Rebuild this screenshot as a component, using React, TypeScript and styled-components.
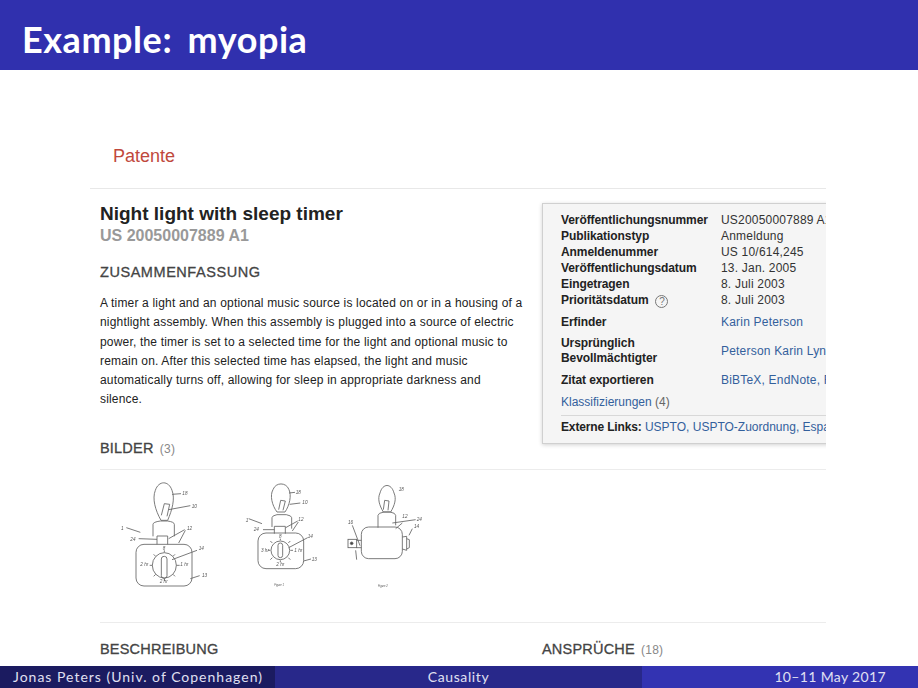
import React from "react";
import styled, { createGlobalStyle } from "styled-components";

const GlobalStyle = createGlobalStyle`
  html, body {
    margin: 0;
    padding: 0;
    background: #fff;
  }
`;

interface MetaRow {
  label: string;
  value: string;
}

const idRows: MetaRow[] = [
  { label: "Veröffentlichungsnummer", value: "US20050007889 A1" },
  { label: "Publikationstyp", value: "Anmeldung" },
  { label: "Anmeldenummer", value: "US 10/614,245" },
  { label: "Veröffentlichungsdatum", value: "13. Jan. 2005" },
  { label: "Eingetragen", value: "8. Juli 2003" },
];

// the three patent drawings use the same coordinates as a 3x crop of the page
function DrawingOne() {
  return (
    <Sketch width="100" height="117" viewBox="80 20 300 351">
      <path d="M212 150 C195 120 185 85 195 60 C205 30 235 30 245 60 C255 85 245 120 232 150 Z" />
      <path d="M213 135 L222 100 L238 102 L230 138" />
      <path d="M188 198 V162 Q188 155 210 152 H232 Q252 155 252 162 V198" />
      <path d="M200 222 V197 H232 V222" />
      <rect x="137" y="222" width="168" height="125" rx="24" />
      <ellipse cx="222" cy="285" rx="36" ry="38" />
      <rect x="213" y="258" width="17" height="66" rx="8" />
      <path d="M222 240 V246 M222 324 V332 M178 285 H186 M258 285 H268 M190 252 L196 258 M254 252 L248 258 M190 318 L196 312 M254 318 L248 312" />
      <path d="M108 172 L150 186 M145 205 L200 207 M235 205 L283 178 M265 218 L285 180 M245 268 L320 240 M300 325 L328 316 M245 72 L272 70 M235 118 L300 106" />
      <SketchLabel x="92" y="180">1</SketchLabel>
      <SketchLabel x="120" y="212">24</SketchLabel>
      <SketchLabel x="290" y="178">12</SketchLabel>
      <SketchLabel x="325" y="238">14</SketchLabel>
      <SketchLabel x="335" y="320">13</SketchLabel>
      <SketchLabel x="276" y="75">18</SketchLabel>
      <SketchLabel x="304" y="112">10</SketchLabel>
      <SketchLabel x="217" y="238">8</SketchLabel>
      <SketchLabel x="150" y="288">2 hr</SketchLabel>
      <SketchLabel x="270" y="288">1 hr</SketchLabel>
      <SketchLabel x="208" y="337">2 hr</SketchLabel>
    </Sketch>
  );
}

function DrawingTwo() {
  return (
    <Sketch width="86.67" height="117" viewBox="440 20 260 351">
      <path d="M560 125 C545 105 538 75 548 58 C556 35 588 35 596 58 C604 75 598 105 584 125 Z" />
      <path d="M565 118 L571 90 L585 92 L578 120" />
      <path d="M545 170 V142 Q545 136 560 133 H588 Q604 136 604 142 V175" />
      <path d="M552 190 V168 H585 V190" />
      <rect x="503" y="188" width="137" height="107" rx="24" />
      <ellipse cx="570" cy="240" rx="28" ry="28" />
      <rect x="563" y="218" width="14" height="44" rx="7" />
      <path d="M570 205 V210 M570 270 V276 M533 240 H540 M600 240 H608 M540 212 L546 218 M600 212 L594 218 M540 268 L546 262 M600 268 L594 262" />
      <path d="M475 145 L515 160 M518 178 L552 178 M586 172 L622 152 M606 182 L624 155 M595 232 L652 202 M640 272 L662 266 M596 68 L614 66 M598 102 L630 98" />
      <SketchLabel x="466" y="155">1</SketchLabel>
      <SketchLabel x="490" y="182">24</SketchLabel>
      <SketchLabel x="624" y="153">12</SketchLabel>
      <SketchLabel x="652" y="204">14</SketchLabel>
      <SketchLabel x="664" y="272">13</SketchLabel>
      <SketchLabel x="616" y="71">18</SketchLabel>
      <SketchLabel x="636" y="101">10</SketchLabel>
      <SketchLabel x="566" y="204">8</SketchLabel>
      <SketchLabel x="512" y="244">3 hr</SketchLabel>
      <SketchLabel x="612" y="244">1 hr</SketchLabel>
      <SketchLabel x="558" y="287">2 hr</SketchLabel>
      <SketchCaption x="552" y="348">Figure 1</SketchCaption>
    </Sketch>
  );
}

function DrawingThree() {
  return (
    <Sketch width="80" height="117" viewBox="760 20 240 351">
      <path d="M878 125 C866 105 860 85 868 68 C876 38 902 38 910 68 C918 85 912 105 900 125 Z" />
      <path d="M878 118 L882 90 L895 92 L892 120" />
      <path d="M862 172 V135 Q862 128 880 125 H898 Q915 128 915 135 V165" />
      <rect x="812" y="170" width="123" height="95" rx="22" />
      <rect x="772" y="207" width="26" height="25" />
      <circle cx="783" cy="219" r="4" fill="#444" />
      <path d="M798 210 H812 M798 232 H812 M935 200 L948 198 V240 L935 236 M948 205 L956 208 V232 L948 236" />
      <path d="M785 165 L808 226 M905 158 L975 148 M915 175 L935 158 M955 195 L965 175 M795 240 L798 268" />
      <SketchLabel x="772" y="160">16</SketchLabel>
      <SketchLabel x="978" y="152">24</SketchLabel>
      <SketchLabel x="935" y="142">12</SketchLabel>
      <SketchLabel x="970" y="173">14</SketchLabel>
      <SketchLabel x="924" y="63">18</SketchLabel>
      <SketchCaption x="862" y="350">Figure 2</SketchCaption>
    </Sketch>
  );
}

export default function App() {
  return (
    <Slide>
      <GlobalStyle />
      <TitleBar>Example: myopia</TitleBar>

      <Body>
        <Page>
          <BrandRow>Patente</BrandRow>

          <TopGrid>
            <LeftColumn>
              <PatentTitle>Night light with sleep timer</PatentTitle>
              <PatentNumber>US 20050007889 A1</PatentNumber>
              <SectionHeading $spaced>ZUSAMMENFASSUNG</SectionHeading>
              <Abstract>
                A timer a light and an optional music source is located on or in a housing of a nightlight assembly. When this assembly is plugged into a source of electric power, the timer is set to a selected time for the light and optional music to remain on. After this selected time has elapsed, the light and music automatically turns off, allowing for sleep in appropriate darkness and silence.
              </Abstract>
            </LeftColumn>

            <InfoBox>
              <InfoGrid>
                {idRows.map((row) => (
                  <React.Fragment key={row.label}>
                    <InfoLabel>{row.label}</InfoLabel>
                    <InfoValue>{row.value}</InfoValue>
                  </React.Fragment>
                ))}
                <InfoLabel>
                  Prioritätsdatum
                  <HelpIcon>?</HelpIcon>
                </InfoLabel>
                <InfoValue>8. Juli 2003</InfoValue>
              </InfoGrid>

              <InfoGrid $gap>
                <InfoLabel>Erfinder</InfoLabel>
                <InfoLink>Karin Peterson</InfoLink>
              </InfoGrid>
              <InfoGrid $gap>
                <TallLabel>Ursprünglich<br />Bevollmächtigter</TallLabel>
                <InfoLink>Peterson Karin Lynn</InfoLink>
              </InfoGrid>
              <InfoGrid $gap>
                <InfoLabel>Zitat exportieren</InfoLabel>
                <InfoLink>BiBTeX, EndNote, RefMan</InfoLink>
              </InfoGrid>

              <Classifications>
                <a>Klassifizierungen</a> <span>(4)</span>
              </Classifications>
              <ExternalLinks>
                <strong>Externe Links:</strong> <a>USPTO, USPTO-Zuordnung, Espacenet</a>
              </ExternalLinks>
            </InfoBox>
          </TopGrid>

          <ImagesSection>
            <SectionHeading>
              BILDER <Count>(3)</Count>
            </SectionHeading>
            <Thumbs>
              <DrawingOne />
              <DrawingTwo />
              <DrawingThree />
            </Thumbs>
          </ImagesSection>

          <BottomGrid>
            <SectionHeading>BESCHREIBUNG</SectionHeading>
            <SectionHeading>
              ANSPRÜCHE <Count>(18)</Count>
            </SectionHeading>
          </BottomGrid>
        </Page>
      </Body>

      <FooterBar>
        <FooterCell $bg="#1b1b60" $width={275} $align="left" $spacing={1}>Jonas Peters (Univ. of Copenhagen)</FooterCell>
        <FooterCell $bg="#28288a" $width={367} $align="center" $spacing={0.6}>Causality</FooterCell>
        <FooterCell $bg="#3333b2" $width={276} $align="right" $spacing={0.35}>10–11 May 2017</FooterCell>
      </FooterBar>
    </Slide>
  );
}

const Slide = styled.div`
  width: 918px;
  height: 688px;
  display: flex;
  flex-direction: column;
  overflow: hidden;
  background: #fff;
`;

const TitleBar = styled.header`
  flex: 0 0 70px;
  box-sizing: border-box;
  padding: 7px 0 0 22px;
  display: flex;
  align-items: center;
  background: #3030ae;
  color: #fff;
  font-family: "Lato", "Open Sans", sans-serif;
  font-size: 36px;
  font-weight: 700;
  word-spacing: 6px;
  letter-spacing: 0.55px;
`;

const Body = styled.main`
  flex: 1;
  min-height: 0;
  padding-left: 90px;
  overflow: hidden;
`;

const Page = styled.div`
  width: 736px;
  height: 100%;
  overflow: hidden;
  font-family: "Liberation Sans", Arial, sans-serif;
`;

const BrandRow = styled.div`
  height: 119px;
  box-sizing: border-box;
  padding: 75px 0 0 23px;
  border-bottom: 1px solid #e8e8e8;
  color: #c0483c;
  font-size: 18px;
  line-height: 22px;
`;

const TopGrid = styled.div`
  display: grid;
  grid-template-columns: 425px 340px;
  column-gap: 17px;
  padding: 15px 0 0 10px;
  height: 250px;
  box-sizing: border-box;
`;

const LeftColumn = styled.div`
  display: flex;
  flex-direction: column;
`;

const PatentTitle = styled.h1`
  margin: 0;
  color: #222;
  font-size: 19px;
  line-height: 20px;
  font-weight: 700;
`;

const PatentNumber = styled.div`
  margin-top: 2px;
  color: #999;
  font-size: 16px;
  line-height: 20px;
  font-weight: 700;
`;

const SectionHeading = styled.h2<{ $spaced?: boolean }>`
  margin: ${(p) => (p.$spaced ? "17px 0 0" : "0")};
  color: #444;
  font-size: 14.5px;
  line-height: 18px;
  font-weight: 400;
  -webkit-text-stroke: 0.3px #444;
  letter-spacing: ${(p) => (p.$spaced ? "0.55px" : "0.2px")};
`;

const Count = styled.span`
  color: #888;
  font-size: 12px;
  font-weight: 400;
  -webkit-text-stroke: 0;
  margin-left: 2px;
`;

const Abstract = styled.p`
  margin: 13px 0 0;
  width: 425px;
  color: #222;
  font-size: 12px;
  line-height: 19.3px;
  letter-spacing: 0.18px;
`;

const InfoBox = styled.aside`
  box-sizing: border-box;
  width: 340px;
  height: 241px;
  margin-top: -1px;
  padding: 8px 0 0 18px;
  background: #f5f5f5;
  border: 1px solid #d0d0d0;
  box-shadow: 0 1px 4px rgba(0, 0, 0, 0.18);
  font-size: 12px;
  line-height: 16px;
`;

const InfoGrid = styled.div<{ $gap?: boolean }>`
  display: grid;
  grid-template-columns: 160px 1fr;
  align-items: center;
  margin-top: ${(p) => (p.$gap ? "6px" : "0")};
`;

const InfoLabel = styled.div`
  color: #222;
  font-weight: 700;
  white-space: nowrap;
  letter-spacing: -0.08px;
`;

const TallLabel = styled(InfoLabel)`
  line-height: 15px;
`;

const InfoValue = styled.div`
  color: #333;
  white-space: nowrap;
  letter-spacing: 0.2px;
`;

const InfoLink = styled(InfoValue)`
  color: #33609c;
`;

const HelpIcon = styled.span`
  display: inline-block;
  width: 11px;
  height: 11px;
  margin-left: 7px;
  border: 1px solid #777;
  border-radius: 50%;
  color: #777;
  font-size: 10px;
  line-height: 11px;
  font-weight: 400;
  text-align: center;
  vertical-align: -1px;
`;

const Classifications = styled.div`
  margin-top: 6px;
  padding-bottom: 5px;
  color: #666;
  white-space: nowrap;
  border-bottom: 1px solid #d8d8d8;

  a {
    color: #33609c;
  }
`;

const ExternalLinks = styled.div`
  margin-top: 3px;
  color: #33609c;
  white-space: nowrap;

  strong {
    color: #222;
    letter-spacing: -0.15px;
  }
`;

const ImagesSection = styled.section`
  margin-left: 10px;
  height: 184px;
  box-sizing: border-box;
  border-bottom: 1px solid #ececec;
`;

const Thumbs = styled.div`
  display: flex;
  align-items: flex-start;
  gap: 20px;
  margin-top: 11px;
  padding: 7px 0 0 17px;
  border-top: 1px solid #ececec;
`;

const Sketch = styled.svg`
  display: block;
  fill: none;
  stroke: #666;
  stroke-width: 2.6;
  filter: blur(0.35px);
`;

const SketchLabel = styled.text`
  font-family: "Liberation Sans", Arial, sans-serif;
  font-size: 14px;
  font-style: italic;
  fill: #555;
  stroke: none;
`;

const SketchCaption = styled(SketchLabel)`
  font-size: 8px;
`;

const BottomGrid = styled.div`
  display: grid;
  grid-template-columns: 425px 1fr;
  column-gap: 17px;
  padding: 17px 0 0 10px;
`;

const FooterBar = styled.footer`
  flex: 0 0 22px;
  display: flex;
`;

const FooterCell = styled.div<{ $bg: string; $width: number; $align: string; $spacing: number }>`
  box-sizing: border-box;
  width: ${(p) => p.$width}px;
  padding: ${(p) => (p.$align === "center" ? "0" : "0 32px 0 13px")};
  background: ${(p) => p.$bg};
  color: #e0e0f2;
  font-family: "Lato", "Open Sans", sans-serif;
  font-size: 14px;
  line-height: 21px;
  letter-spacing: ${(p) => p.$spacing}px;
  text-align: ${(p) => p.$align};
  white-space: nowrap;
`;
